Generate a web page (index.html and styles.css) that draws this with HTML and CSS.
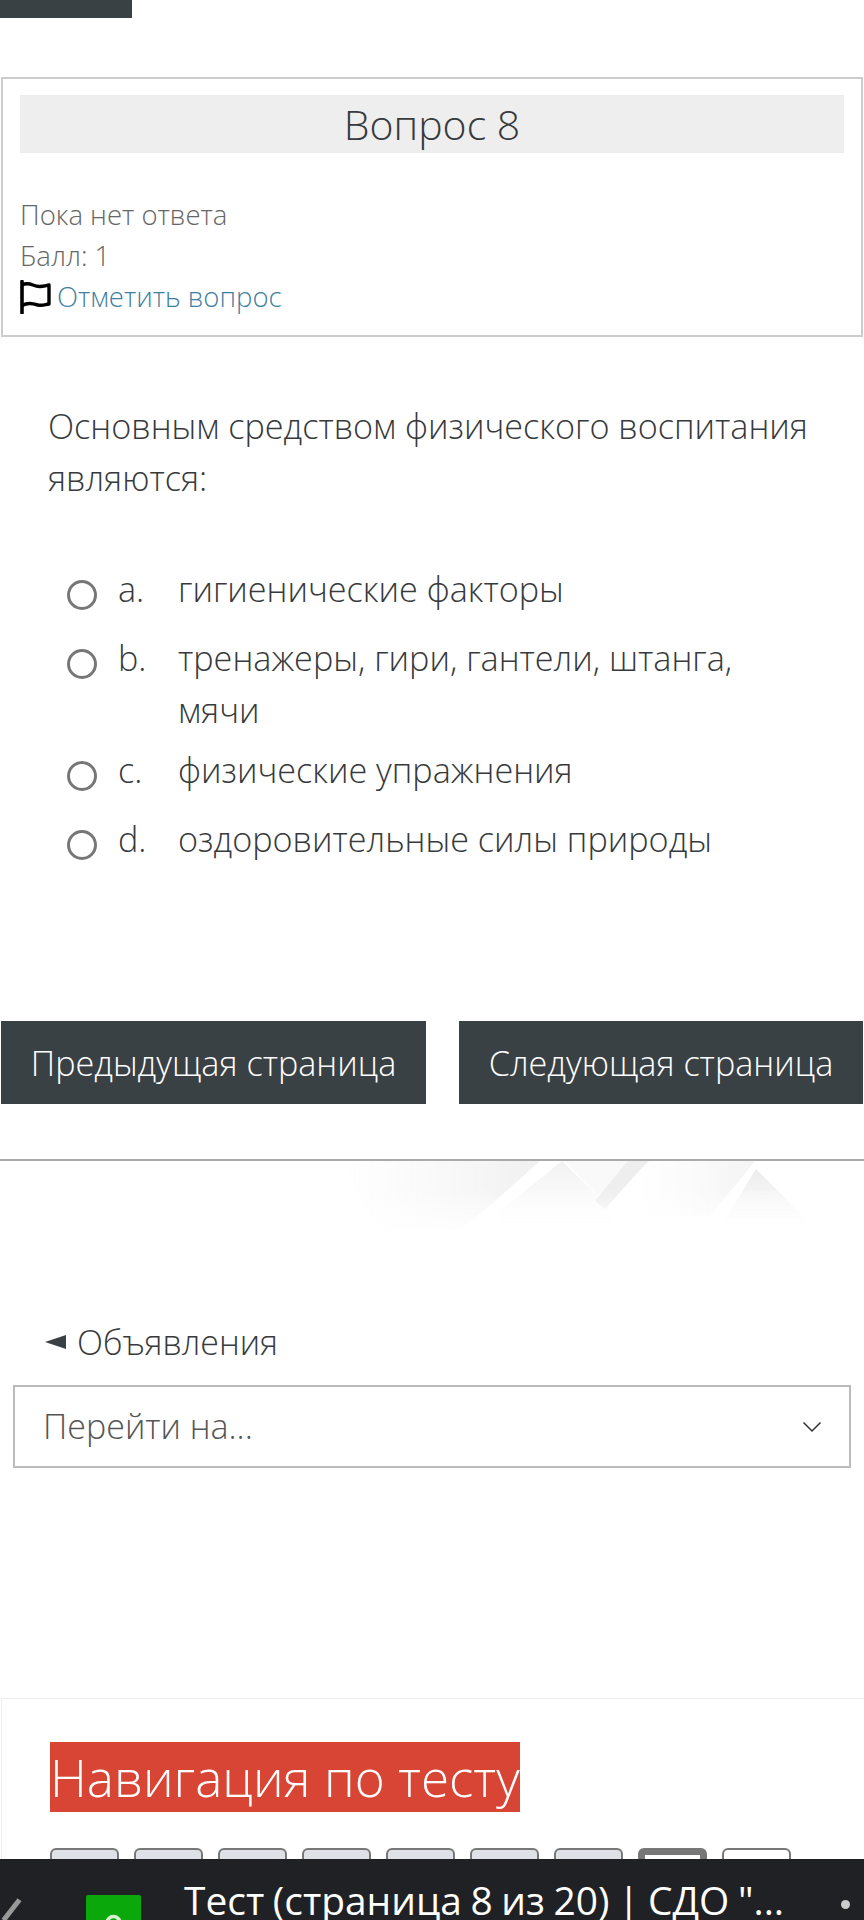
FILE: index.html
```html
<!DOCTYPE html>
<html lang="ru">

<head>
     <meta charset="UTF-8">
     <meta name="viewport" content="width=device-width, initial-scale=1.0">
     <title>Тест (страница 8 из 20)</title>
     <link rel="stylesheet" href="styles.css">
</head>

<body>
     <div class="top-stub"></div>

     <section class="info">
          <h3 class="info-title">Вопрос 8</h3>
          <div class="info-state">Пока нет ответа</div>
          <div class="info-grade">Балл: 1</div>
          <div class="info-flag">
               <svg class="flag" viewBox="0 0 32 34" width="32" height="34">
                    <path d="M3 1.500V33" fill="none" stroke="#000" stroke-width="3.600" stroke-linecap="round"/>
                    <path d="M3 5C11 1 14 7 21 6.500C25 6.200 27 5.500 30 5V24C26 24.500 24 26 19 25C13 23.500 9 22.500 3 25.500" fill="none" stroke="#000" stroke-width="3.400" stroke-linejoin="round"/>
               </svg>
               <a href="#">Отметить вопрос</a>
          </div>
     </section>

     <section class="question">
          <p class="question-text">Основным средством физического воспитания являются:</p>
          <div class="answers">
               <label class="answer"><span class="radio"></span><span class="letter">a.</span><span class="answer-text">гигиенические факторы</span></label>
               <label class="answer"><span class="radio"></span><span class="letter">b.</span><span class="answer-text">тренажеры, гири, гантели, штанга, мячи</span></label>
               <label class="answer"><span class="radio"></span><span class="letter">c.</span><span class="answer-text">физические упражнения</span></label>
               <label class="answer"><span class="radio"></span><span class="letter">d.</span><span class="answer-text">оздоровительные силы природы</span></label>
          </div>
     </section>

     <nav class="pager">
          <a class="btn btn-prev" href="#">Предыдущая страница</a>
          <a class="btn btn-next" href="#">Следующая страница</a>
     </nav>

     <footer class="decor">
          <svg viewBox="0 0 510 90" width="510" height="90">
               <defs>
                    <linearGradient id="fade" x1="0" y1="0" x2="0" y2="1">
                         <stop offset="0" stop-color="#e6e6e6"/>
                         <stop offset="1" stop-color="#f4f4f4" stop-opacity="0"/>
                    </linearGradient>
                    <linearGradient id="side" x1="0" y1="0" x2="1" y2="0">
                         <stop offset="0" stop-color="#f4f4f4" stop-opacity="0"/>
                         <stop offset=".5" stop-color="#f2f2f2" stop-opacity=".8"/>
                         <stop offset="1" stop-color="#e6e6e6"/>
                    </linearGradient>
               </defs>
               <path d="M10 0H210L165 40L130 70H50Z" fill="url(#side)" opacity=".6"/>
               <path d="M235 0L275 42L320 0Z" fill="#f9f9f9"/>
               <path d="M318 0L275 48L265 40L298 0Z" fill="#eee"/>
               <path d="M318 0H425L380 55H325L305 40Z" fill="url(#side)" opacity=".45"/>
               <path d="M170 50L232 0L275 42L290 75H170Z" fill="url(#fade)" opacity=".55"/>
               <path d="M426 8L480 62L455 75H385Z" fill="url(#fade)" opacity=".8"/>
          </svg>
     </footer>

     <div class="jump">
          <a class="jump-back" href="#"><span class="arrow"></span>Объявления</a>
          <div class="jump-select">
               <span class="jump-label">Перейти на...</span>
               <svg viewBox="0 0 20 12" width="20" height="12">
                    <path d="M1.500 1.500L10 10L18.500 1.500" fill="none" stroke="#333" stroke-width="1.500"/>
               </svg>
          </div>
     </div>

     <aside class="quiz-nav">
          <h3 class="quiz-nav-title">Навигация по тесту</h3>
          <div class="quiz-nav-grid">
               <span class="qn done"></span>
               <span class="qn done"></span>
               <span class="qn done"></span>
               <span class="qn done"></span>
               <span class="qn done"></span>
               <span class="qn done"></span>
               <span class="qn done"></span>
               <span class="qn current"></span>
               <span class="qn"></span>
          </div>
     </aside>

     <div class="tab-bar">
          <span class="tab-close"></span>
          <span class="tab-icon">
               <svg viewBox="0 0 55 24" width="55" height="24">
                    <path d="M21 23V15A6.500 6.500 0 0 1 34 15V23" fill="none" stroke="#d6f0d0" stroke-width="3.500"/>
               </svg>
          </span>
          <span class="tab-title">Тест (страница 8 из 20) | СДО "...</span>
          <span class="tab-dot"></span>
     </div>
</body>

</html>
```

FILE: styles.css
```css
html {
     box-sizing: border-box;
     font-family: "Open Sans", sans-serif;
     font-size: 16px;
}

*,
*:before,
*:after {
     box-sizing: inherit;
}

body {
     margin: 0;
     height: 1920px;
     overflow: hidden;
     background-color: #fff;
     color: #373a3c;
     font-weight: 300;
}

a {
     text-decoration: none;
}

.top-stub {
     width: 132px;
     height: 18px;
     background-color: #3a4145;
}

.info {
     margin: 59px 1px 0;
     height: 260px;
     padding: 16px 17px 0;
     border: 2px solid #ccc;
}

.info-title {
     margin: 0 0 41px;
     height: 58px;
     background-color: #eee;
     font-size: 41px;
     font-weight: 300;
     line-height: 58px;
     text-align: center;
}

.info-state,
.info-grade,
.info-flag {
     height: 41px;
     font-size: 27.500px;
     line-height: 41px;
     color: #666;
}

.info-flag {
     display: flex;
     align-items: center;
}

.flag {
     flex: none;
     margin: 1px 6px 0 -1px;
}

.info-flag a {
     color: #3f7fa0;
}

.question {
     padding: 63px 48px 0;
}

.question-text {
     margin: 0;
     font-size: 34.200px;
     line-height: 52px;
}

.answers {
     margin-top: 59px;
     padding-left: 19px;
}

.answer {
     display: flex;
     align-items: flex-start;
     min-height: 69px;
     padding-bottom: 8px;
     font-size: 34.200px;
     line-height: 52px;
}

.radio {
     flex: none;
     width: 30px;
     height: 30px;
     margin: 17px 21px 0 0;
     border: 3px solid #777;
     border-radius: 50%;
}

.letter {
     flex: none;
     width: 60px;
}

.pager {
     display: flex;
     justify-content: space-between;
     margin-top: 139px;
     padding: 0 1px;
}

.btn {
     height: 83px;
     background-color: #3a4145;
     color: #fff;
     font-size: 34.200px;
     line-height: 83px;
     text-align: center;
}

.btn-prev {
     width: 425px;
}

.btn-next {
     width: 404px;
}

.decor {
     height: 139px;
     margin-top: 55px;
     border-top: 2px solid #aaa;
     padding-left: 330px;
}

.decor svg {
     display: block;
     -webkit-mask-image: linear-gradient(to bottom, #000 30%, transparent 85%);
     mask-image: linear-gradient(to bottom, #000 30%, transparent 85%);
     filter: blur(.6px);
}

.jump {
     padding: 0 13px;
}

.jump-back {
     display: flex;
     align-items: center;
     padding-left: 32px;
     height: 87px;
     color: #373a3c;
     font-size: 34px;
}

.arrow {
     width: 0;
     height: 0;
     margin-right: 11px;
     border-top: 7px solid transparent;
     border-bottom: 7px solid transparent;
     border-right: 21px solid #3a4145;
}

.jump-select {
     display: flex;
     justify-content: space-between;
     align-items: center;
     height: 83px;
     padding: 0 27px 0 28px;
     border: 2px solid #bbb;
     font-size: 34px;
     color: #555;
}

.jump-label {
     margin-bottom: 2px;
}

.quiz-nav {
     margin: 230px 0 0 1px;
     height: 300px;
     padding: 43px 48px 0;
     border-top: 1px solid #eee;
     border-left: 1px solid #eee;
}

.quiz-nav-title {
     display: inline-block;
     margin: 0 0 36px;
     height: 70px;
     background-color: #d84535;
     color: #fff;
     font-size: 51.200px;
     font-weight: 300;
     line-height: 70px;
}

.quiz-nav-grid {
     display: flex;
     gap: 15px;
}

.qn {
     width: 69px;
     height: 60px;
     border: 2px solid #777;
     border-radius: 6px;
     background-color: #fff;
}

.qn.done {
     background-color: #dee2e6;
}

.qn.current {
     border-width: 7px;
}

/* browser tab title strip lies over the page bottom */
.tab-bar {
     position: fixed;
     left: 0;
     right: 0;
     bottom: 0;
     height: 61px;
     background-color: #202124;
     display: flex;
     align-items: flex-start;
     overflow: hidden;
}

.tab-close {
     width: 5px;
     height: 26px;
     margin: 38px 0 0 9px;
     background-color: #999;
     transform: rotate(38deg);
}

.tab-icon {
     width: 55px;
     height: 40px;
     margin: 36px 0 0 72px;
     background-color: #0aa80a;
     border-radius: 2px;
}

.tab-icon svg {
     display: block;
     margin-top: 13px;
}

.tab-title {
     margin: 10px 0 0 43px;
     color: #fff;
     font-size: 38.900px;
     font-weight: 400;
     line-height: 61px;
     white-space: nowrap;
     word-spacing: -1.500px;
}

.tab-dot {
     position: absolute;
     left: 841px;
     top: 41px;
     width: 9px;
     height: 9px;
     border-radius: 50%;
     background-color: #ccc;
}
```
